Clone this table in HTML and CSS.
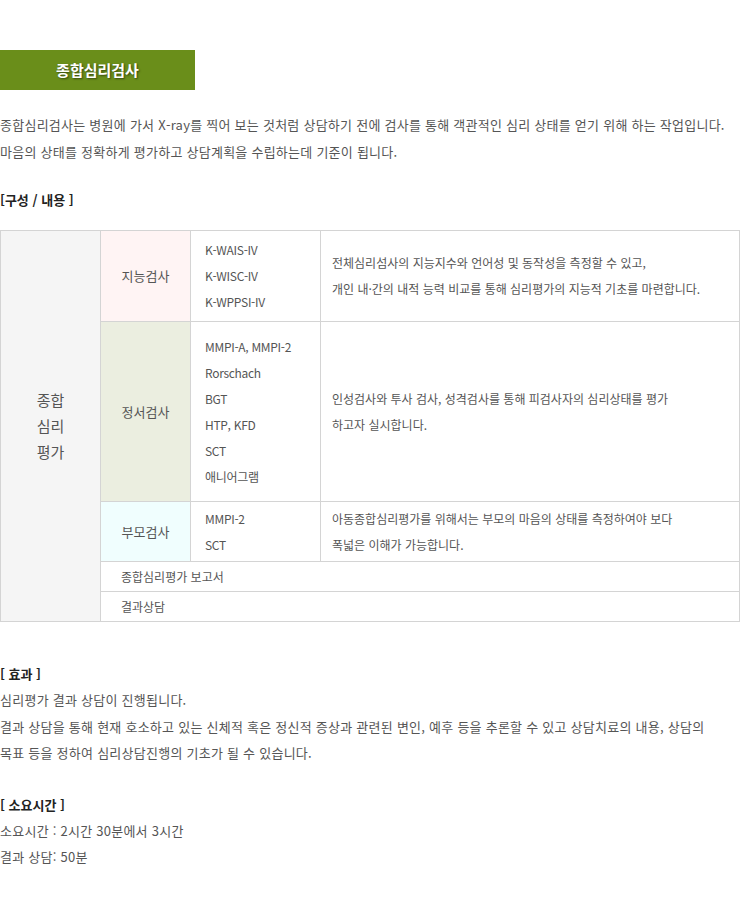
FILE: index.html
```html
<!DOCTYPE html>
<html lang="ko">
<head>
<meta charset="utf-8">
<title>종합심리검사</title>
<link rel="stylesheet" href="styles.css">
</head>
<body>
<div class="page">
  <h2 class="title-bar">종합심리검사</h2>
  <p class="intro">종합심리검사는 병원에 가서 X-ray를 찍어 보는 것처럼 상담하기 전에 검사를 통해 객관적인 심리 상태를 얻기 위해 하는 작업입니다.<br>마음의 상태를 정확하게 평가하고 상담계획을 수립하는데 기준이 됩니다.</p>
  <h3 class="sec-title">[구성 / 내용 ]</h3>
  <table class="test-table">
    <colgroup>
      <col class="c1"><col class="c2"><col class="c3"><col class="c4">
    </colgroup>
    <tr class="r1">
      <td rowspan="5" class="main">종합<br>심리<br>평가</td>
      <td class="cat pink">지능검사</td>
      <td class="tools">K-WAIS-IV<br>K-WISC-IV<br>K-WPPSI-IV</td>
      <td class="desc">전체심리섬사의 지능지수와 언어성 및 동작성을 측정할 수 있고,<br>개인 내·간의 내적 능력 비교를 통해 심리평가의 지능적 기초를 마련합니다.</td>
    </tr>
    <tr class="r2">
      <td class="cat olive">정서검사</td>
      <td class="tools">MMPI-A, MMPI-2<br>Rorschach<br>BGT<br>HTP, KFD<br>SCT<br>애니어그램</td>
      <td class="desc">인성검사와 투사 검사, 성격검사를 통해 피검사자의 심리상태를 평가<br>하고자 실시합니다.</td>
    </tr>
    <tr class="r3">
      <td class="cat mint">부모검사</td>
      <td class="tools">MMPI-2<br>SCT</td>
      <td class="desc">아동종합심리평가를 위해서는 부모의 마음의 상태를 측정하여야 보다<br>폭넓은 이해가 가능합니다.</td>
    </tr>
    <tr class="r4">
      <td colspan="3" class="wide">종합심리평가 보고서</td>
    </tr>
    <tr class="r5">
      <td colspan="3" class="wide">결과상담</td>
    </tr>
  </table>
  <section class="block effect">
    <h3 class="sec-title">[ 효과 ]</h3>
    <p class="body-text">심리평가 결과 상담이 진행됩니다.<br>결과 상담을 통해 현재 호소하고 있는 신체적 혹은 정신적 증상과 관련된 변인, 예후 등을 추론할 수 있고 상담치료의 내용, 상담의<br>목표 등을 정하여 심리상담진행의 기초가 될 수 있습니다.</p>
  </section>
  <section class="block time">
    <h3 class="sec-title">[ 소요시간 ]</h3>
    <p class="body-text">소요시간 : 2시간 30분에서 3시간<br>결과 상담: 50분</p>
  </section>
</div>
</body>
</html>
```
FILE: styles.css
```css
html, body {
  margin: 0;
  padding: 0;
  background: #fff;
}
body {
  font-family: "Noto Sans CJK KR", "Noto Sans", sans-serif;
  color: #555;
}
.page {
  width: 740px;
  padding-top: 50px;
}
.title-bar {
  margin: 0;
  width: 195px;
  height: 40px;
  line-height: 40px;
  background: #6a8e1a;
  color: #fff;
  font-size: 15px;
  font-weight: bold;
  text-align: center;
  text-shadow: 1px 1px 2px rgba(0,0,0,0.5);
}
.intro {
  margin: 21px 0 0;
  font-size: 13px;
  line-height: 27px;
  letter-spacing: 0.25px;
}
.sec-title {
  margin: 21px 0 0;
  font-size: 13px;
  line-height: 27px;
  font-weight: bold;
  color: #222;
}
.test-table {
  margin-top: 17px;
  width: 740px;
  border-collapse: collapse;
  table-layout: fixed;
  font-size: 12px;
  letter-spacing: 0;
}
.c1 { width: 100px; }
.c2 { width: 90px; }
.c3 { width: 130px; }
.test-table td {
  border: 1px solid #d4d4d4;
  padding: 0;
  line-height: 26px;
  vertical-align: middle;
}
.main {
  background: #f5f5f5;
  text-align: center;
  font-size: 15px;
}
.cat { text-align: center; font-size: 13px; }
.pink { background: #fff4f4; }
.olive { background: #ebeee0; }
.mint { background: #f0fefe; }
.test-table td.tools { padding: 2px 0 2px 14px; letter-spacing: -0.3px; }
.test-table td.desc { padding: 2px 11px; }
.r1 { height: 91px; }
.r2 { height: 180px; }
.r3 { height: 60px; }
.r4, .r5 { height: 30px; }
.test-table td.wide { padding: 0 20px; line-height: 22px; }
.block .sec-title { margin-top: 0; }
.effect { margin-top: 38px; }
.time { margin-top: 24px; }
.body-text {
  margin: 0;
  font-size: 13px;
  line-height: 26.5px;
  letter-spacing: 0.25px;
}
```
